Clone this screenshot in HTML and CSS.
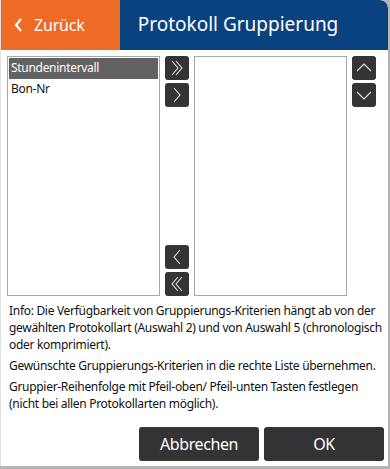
FILE: index.html
```html
<!DOCTYPE html>
<html lang="de">
<head>
<meta charset="utf-8">
<link rel="stylesheet" href="styles.css">
</head>
<body>
<div class="dialog">
  <div class="header">
    <div class="back">
      <svg class="back-icon" width="12" height="16" viewBox="0 0 12 16"><path d="M8 2 L3 8 L8 14" fill="none" stroke="#fff" stroke-width="2.2"/></svg>
      <span>Zurück</span>
    </div>
    <div class="title">Protokoll Gruppierung</div>
  </div>
  <div class="main">
    <div class="list">
      <div class="item selected">Stundenintervall</div>
      <div class="item">Bon-Nr</div>
    </div>
    <div class="btncol">
      <div class="group">
        <div class="ibtn"><svg width="24" height="24" viewBox="0 0 24 24"><path d="M7 5 L13 12 L7 19 M11 5 L17 12 L11 19" fill="none" stroke="#e6e6e6" stroke-width="1.1"/></svg></div>
        <div class="ibtn"><svg width="24" height="24" viewBox="0 0 24 24"><path d="M9 5 L15 12 L9 19" fill="none" stroke="#e6e6e6" stroke-width="1.1"/></svg></div>
      </div>
      <div class="group">
        <div class="ibtn"><svg width="24" height="24" viewBox="0 0 24 24"><path d="M15 5 L9 12 L15 19" fill="none" stroke="#e6e6e6" stroke-width="1.1"/></svg></div>
        <div class="ibtn"><svg width="24" height="24" viewBox="0 0 24 24"><path d="M17 5 L11 12 L17 19 M13 5 L7 12 L13 19" fill="none" stroke="#e6e6e6" stroke-width="1.1"/></svg></div>
      </div>
    </div>
    <div class="list"></div>
    <div class="btncol">
      <div class="group">
        <div class="ibtn"><svg width="24" height="24" viewBox="0 0 24 24"><path d="M5 15 L12 8 L19 15" fill="none" stroke="#e6e6e6" stroke-width="1.1"/></svg></div>
        <div class="ibtn"><svg width="24" height="24" viewBox="0 0 24 24"><path d="M5 9 L12 16 L19 9" fill="none" stroke="#e6e6e6" stroke-width="1.1"/></svg></div>
      </div>
    </div>
  </div>
  <div class="info">
    <p>Info: Die Verfügbarkeit von Gruppierungs-Kriterien hängt ab von der gewählten Protokollart (Auswahl 2) und von Auswahl 5 (chronologisch oder komprimiert).</p>
    <p>Gewünschte Gruppierungs-Kriterien in die rechte Liste übernehmen.</p>
    <p>Gruppier-Reihenfolge mit Pfeil-oben/ Pfeil-unten Tasten festlegen (nicht bei allen Protokollarten möglich).</p>
  </div>
  <div class="footer">
    <div class="btn">Abbrechen</div>
    <div class="btn">OK</div>
  </div>
</div>
</body>
</html>
```
FILE: styles.css
```css
html, body {
  margin: 0;
  padding: 0;
}
body {
  background: #b4b4b4;
  width: 390px;
  height: 469px;
  overflow: hidden;
  font-family: "Noto Sans", "Open Sans", sans-serif;
}
.dialog {
  width: 387px;
  height: 466px;
  background: #ffffff;
  border-left: 1px solid #e2e2e2;
  border-top-right-radius: 8px;
  display: flex;
  flex-direction: column;
  overflow: hidden;
}
.header {
  height: 50px;
  display: flex;
  flex-shrink: 0;
}
.back {
  width: 119px;
  background: #ef6a24;
  color: #fff;
  display: flex;
  align-items: center;
  padding-left: 12px;
  box-sizing: border-box;
  font-size: 16px;
  letter-spacing: -0.2px;
  gap: 9px;
}
.back span {
  margin-top: -1px;
}
.title {
  flex: 1;
  background: #0a427f;
  color: #fff;
  display: flex;
  align-items: center;
  justify-content: center;
  font-size: 19px;
  border-top-right-radius: 8px;
  padding-right: 32px;
  padding-bottom: 2px;
}
.main {
  display: flex;
  gap: 5px;
  padding: 6px 0 0 6px;
  height: 240px;
  flex-shrink: 0;
}
.list {
  width: 153px;
  height: 240px;
  box-sizing: border-box;
  border: 1px solid #a8a8ac;
  padding: 1px;
}
.item {
  height: 21px;
  line-height: 20px;
  font-size: 12px;
  letter-spacing: -0.3px;
  padding-left: 2px;
  color: #111;
}
.item.selected {
  background: #626262;
  color: #fff;
}
.btncol {
  width: 24px;
  display: flex;
  flex-direction: column;
  justify-content: space-between;
}
.group {
  display: flex;
  flex-direction: column;
  gap: 3px;
}
.ibtn {
  width: 24px;
  height: 24px;
  background: #343436;
  border-radius: 3px;
}
.ibtn svg {
  display: block;
}
.info {
  padding: 6px 6px 0 8px;
  font-size: 12px;
  letter-spacing: -0.3px;
  line-height: 17px;
  color: #111;
}
.info p {
  margin: 0 0 4px 0;
}
.footer {
  margin-top: auto;
  display: flex;
  justify-content: flex-end;
  gap: 5px;
  padding: 0 4px 5px 0;
}
.btn {
  width: 120px;
  height: 34px;
  background: #333335;
  color: #fff;
  border-radius: 3px;
  display: flex;
  align-items: center;
  justify-content: center;
  font-size: 16px;
  letter-spacing: -0.4px;
}
```
